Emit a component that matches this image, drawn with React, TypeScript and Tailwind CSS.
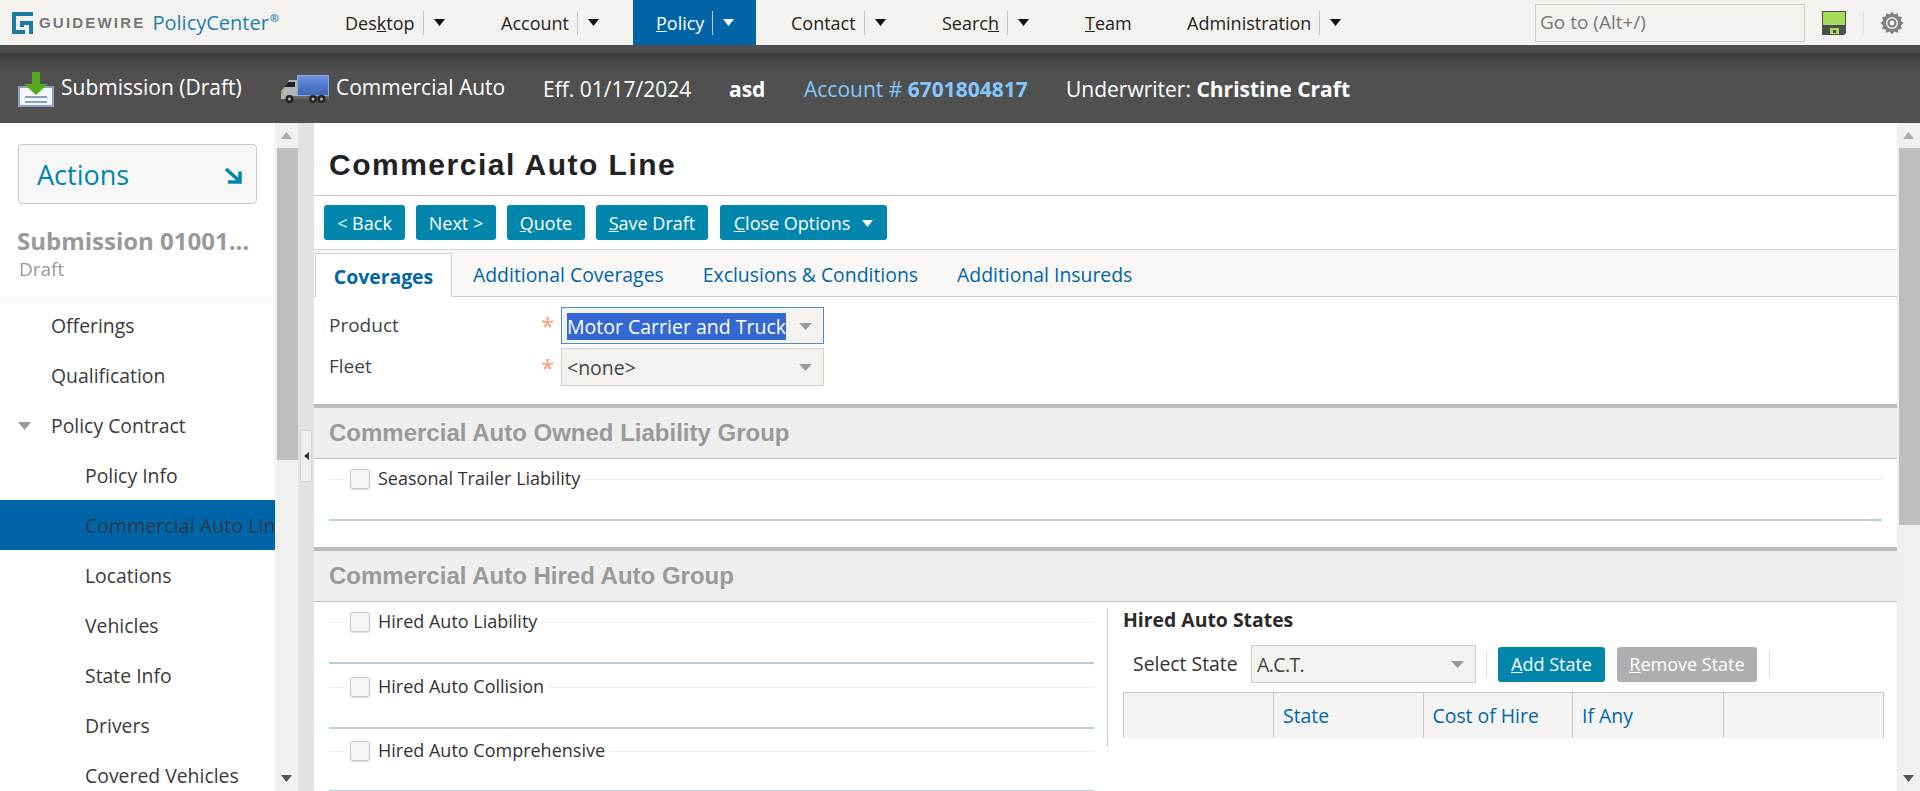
import React from "react";

const Tri = ({ className = "", w = 11, h = 7, fill = "#111" }: { className?: string; w?: number; h?: number; fill?: string }) => (
  <svg width={w} height={h} viewBox="0 0 11 7" preserveAspectRatio="none" className={className}>
    <polygon points="0,0 11,0 5.5,7" fill={fill} />
  </svg>
);

const Sep = () => <div className="h-[24px] w-px bg-[#c9c7c3]" />;

const NavItem = ({ label, boxClass, tw, arrow = true, light = false }: { label: React.ReactNode; boxClass: string; tw: string; arrow?: boolean; light?: boolean }) => (
  <div className={`flex h-full items-center ${boxClass}`}>
    <span className={`${tw} whitespace-nowrap text-[18px] leading-none ${light ? "text-white" : "text-[#222]"}`}>{label}</span>
    {arrow && (
      <>
        <Sep />
        <Tri className="ml-[10px]" fill={light ? "#fff" : "#111"} />
      </>
    )}
  </div>
);

const Btn = ({ children, className = "", grey = false }: { children: React.ReactNode; className?: string; grey?: boolean }) => (
  <div className={`flex h-[35px] shrink-0 items-center justify-center rounded-[3px] pt-[1px] text-[18px] text-white ${grey ? "bg-[#aeaeae]" : "bg-[#0085ad]"} ${className}`}>{children}</div>
);

const SelectBox = ({ children, className = "", focused = false }: { children: React.ReactNode; className?: string; focused?: boolean }) => (
  <div className={`flex items-center justify-between border bg-[#f3f2ef] pl-[5px] pr-[11px] pt-[1px] text-[19.5px] ${focused ? "border-[#4a90c8]" : "border-[#d0d0cc]"} ${className}`}>
    {children}
    <Tri w={13} h={7} fill="#999" />
  </div>
);

const CheckRow = ({ label }: { label: string }) => (
  <div className="flex h-[20px] items-center">
    <div className="h-px w-[16px] bg-[#eeeeee]" />
    <div className="ml-[5px] h-[20px] w-[20px] rounded-[3px] border border-[#c8c8c8] bg-[#f5f5f5] shadow-[0_1px_1px_rgba(0,0,0,0.15)]" />
    <span className="ml-[8px] pb-[2px] text-[18px] leading-none text-[#333]">{label}</span>
    <div className="ml-[4px] h-px flex-1 bg-[#eeeeee]" />
  </div>
);

const Coverage = ({ label, rowClass = "h-[65px]", gapClass = "mt-[30px]" }: { label: string; rowClass?: string; gapClass?: string }) => (
  <div className={rowClass}>
    <CheckRow label={label} />
    <div className={`${gapClass} h-[2px] bg-[#b4cfe2]`} />
  </div>
);

const SideItem = ({ label, deep = false, selected = false, open = false }: { label: string; deep?: boolean; selected?: boolean; open?: boolean }) => (
  <div className={`relative flex h-[50px] shrink-0 items-center overflow-hidden whitespace-nowrap pt-[1px] text-[19.4px] ${deep ? "pl-[85px]" : "pl-[51px]"} ${selected ? "bg-[#0065a8] tracking-[0.12px] text-[#2c3a48]" : "text-[#3a3a3a]"}`}>
    {open && <Tri w={13} h={8} fill="#999" className="absolute left-[18px] top-[22px]" />}
    {label}
  </div>
);

const Scroll = ({ thumb, bottom }: { thumb: string; bottom: string }) => (
  <div className="relative flex w-[23px] shrink-0 flex-col bg-[#f0f0f0]">
    <div className="flex h-[25px] items-center justify-center"><Tri w={11} h={7} fill="#aaa" className="rotate-180" /></div>
    <div className={`ml-[2px] w-[21px] bg-[#bebebe] ${thumb}`} />
    <div className={`absolute left-0 right-0 flex justify-center ${bottom}`}><Tri w={11} h={7} fill="#555" /></div>
  </div>
);

const SectionHead = ({ title }: { title: string }) => (
  <div className="flex h-[55px] items-center border-t-[4px] border-b border-t-[#bcbcbc] border-b-[#c4c4c4] bg-[#eeeeee] pl-[15px] font-['Liberation_Sans',Arial,sans-serif] text-[24px] font-bold leading-none text-[#999]">{title}</div>
);

export default function App() {
  return (
    <div className="flex h-[791px] w-[1920px] flex-col overflow-hidden bg-white font-['Open_Sans',sans-serif] text-[#333]">
      {/* top nav */}
      <div className="flex h-[45px] shrink-0 items-center bg-[#f4f2ef]">
        <div className="flex h-full w-[345px] shrink-0 items-center pl-[12px]">
          <svg width="21" height="22" viewBox="0 0 21 22">
            <path d="M0 0H21V4H4V18H13V22H0Z" fill="#1a7ba3" />
            <path d="M8 9H21V22H17V13H12V15H8Z" fill="#1a7ba3" />
          </svg>
          <span className="ml-[6px] font-['Liberation_Sans',Arial,sans-serif] text-[15px] font-bold leading-none tracking-[2.2px] text-[#777]">GUIDEWIRE</span>
          <span className="ml-[7px] text-[20px] leading-none text-[#1f7fa6]">PolicyCenter</span>
          <span className="mb-[10px] ml-[1px] text-[11px] font-bold leading-none text-[#1f7fa6]">®</span>
        </div>
        <NavItem boxClass="w-[156px] shrink-0" tw="w-[78px]" label={<>Des<u>k</u>top</>} />
        <NavItem boxClass="w-[132px] shrink-0" tw="w-[76px]" label="Account" />
        <NavItem boxClass="w-[123px] shrink-0 bg-[#0065a8] pl-[23px]" tw="w-[56px]" light label={<><u>P</u>olicy</>} />
        <NavItem boxClass="ml-[35px] w-[151px] shrink-0" tw="w-[73px]" label="Contact" />
        <NavItem boxClass="w-[143px] shrink-0" tw="w-[65px]" label={<>Searc<u>h</u></>} />
        <NavItem boxClass="w-[102px] shrink-0" tw="w-[60px]" arrow={false} label={<><u>T</u>eam</>} />
        <NavItem boxClass="shrink-0" tw="w-[132px]" label="Administration" />
        <div className="ml-[194px] flex h-[38px] w-[270px] shrink-0 items-center border border-[#cfcdc8] pl-[4px] text-[19px] text-[#777]">Go to (Alt+/)</div>
        <svg width="24" height="24" viewBox="0 0 24 24" className="ml-[17px] shrink-0">
          <path d="M0 0H24V22L22 24H0Z" fill="#4d4d4d" />
          <rect x="1" y="1" width="22" height="13" fill="#a5dc5c" />
          <rect x="8" y="17" width="9" height="6" fill="#a5dc5c" />
          <rect x="11" y="19" width="3" height="3" fill="#4d4d4d" />
        </svg>
        <div className="ml-[17px] h-[24px] w-px shrink-0 bg-[#e4e2de]" />
        <svg width="24" height="24" viewBox="0 0 24 24" className="ml-[16px] shrink-0">
          <path d="M12 0.5 14.2 3.4 17.6 2.2 18.4 5.6 21.9 6.1 20.8 9.6 23.5 12 20.8 14.4 21.9 17.9 18.4 18.4 17.6 21.8 14.2 20.6 12 23.5 9.8 20.6 6.4 21.8 5.6 18.4 2.1 17.9 3.2 14.4 0.5 12 3.2 9.6 2.1 6.1 5.6 5.6 6.4 2.2 9.8 3.4Z" fill="#808080" />
          <circle cx="12" cy="12" r="6" fill="#f4f2ef" />
          <circle cx="12" cy="12" r="4.6" fill="#808080" />
          <circle cx="12" cy="12" r="2.4" fill="#f4f2ef" />
        </svg>
      </div>

      {/* context bar */}
      <div className="flex h-[78px] shrink-0 flex-col bg-[#505050]">
        <div className="h-[8px] shrink-0 bg-[#4e4e4e]" />
        <div className="flex flex-1 items-start bg-gradient-to-b from-[#3c3c3c] to-[#505050] to-[25%] text-[21px] leading-none text-white">
          <svg width="36" height="35" viewBox="0 0 36 35" className="ml-[18px] mt-[19px] shrink-0">
            <rect x="1" y="15" width="34" height="19" fill="#f3f6fb" stroke="#8aa0c4" strokeWidth="2" />
            <rect x="7" y="24" width="22" height="2" fill="#8aa0c4" />
            <rect x="7" y="29" width="22" height="2" fill="#8aa0c4" />
            <path d="M14 0H22V12H30L18 23L6 12H14Z" fill="#56a81f" />
          </svg>
          <span className="ml-[7px] mt-[24px] w-[220px] shrink-0 whitespace-nowrap">Submission (Draft)</span>
          <svg width="48" height="28" viewBox="0 0 48 28" className="mt-[22px] shrink-0">
            <defs>
              <linearGradient id="truckbox" x1="0" y1="0" x2="0" y2="1">
                <stop offset="0" stopColor="#6b93e6" />
                <stop offset="1" stopColor="#3f62b4" />
              </linearGradient>
            </defs>
            <rect x="16.5" y="0.5" width="31" height="20" fill="url(#truckbox)" stroke="#88a6e0" />
            <path d="M16 5H8L3 13 0 16V24H16Z" fill="#b4b4b4" />
            <path d="M7 7H14V12H3.5Z" fill="#222" />
            <rect x="0" y="16" width="1.5" height="3" fill="#c98a3a" />
            <rect x="12" y="21" width="36" height="3" fill="#666" />
            <circle cx="8.5" cy="24" r="4" fill="#222" />
            <circle cx="32" cy="24" r="4" fill="#222" />
            <circle cx="40.5" cy="24" r="4" fill="#222" />
            <circle cx="8.5" cy="24" r="1.5" fill="#bbb" />
            <circle cx="32" cy="24" r="1.5" fill="#bbb" />
            <circle cx="40.5" cy="24" r="1.5" fill="#bbb" />
          </svg>
          <span className="ml-[7px] mt-[24px] w-[207px] shrink-0 whitespace-nowrap">Commercial Auto</span>
          <span className="mt-[26px] w-[186px] shrink-0 whitespace-nowrap">Eff. 01/17/2024</span>
          <span className="mt-[26px] w-[75px] shrink-0 font-bold">asd</span>
          <span className="mt-[26px] w-[262px] shrink-0 whitespace-nowrap text-[#83c8ff]">Account # <b>6701804817</b></span>
          <span className="mt-[26px] whitespace-nowrap">Underwriter: <b>Christine Craft</b></span>
        </div>
      </div>

      {/* body */}
      <div className="flex min-h-0 flex-1">
        <div className="flex w-[275px] shrink-0 flex-col overflow-hidden">
          <div className="mx-[18px] mt-[21px] flex h-[60px] shrink-0 items-center justify-between rounded-[4px] border border-[#c8c8c8] bg-[#f7f7f7] pl-[18px] pr-[13px] pt-[2px] text-[27px] text-[#0085ad]">
            Actions
            <svg width="19" height="17" viewBox="0 0 19 17"><path d="M2 2 15.5 14M16 4.5V15H4" stroke="#0085ad" strokeWidth="3.6" fill="none" /></svg>
          </div>
          <div className="mt-[21px] h-[75px] shrink-0 border-b border-[#eeeeee] pl-[17px] pt-[1px]">
            <div className="w-[250px] whitespace-nowrap text-[24px] font-bold leading-[30px] text-[#999]">Submission 01001...</div>
            <div className="pl-[2px] pt-[1px] text-[19px] leading-[25px] text-[#999]">Draft</div>
          </div>
          <SideItem label="Offerings" />
          <SideItem label="Qualification" />
          <SideItem label="Policy Contract" open />
          <SideItem label="Policy Info" deep />
          <SideItem label="Commercial Auto Line" deep selected />
          <SideItem label="Locations" deep />
          <SideItem label="Vehicles" deep />
          <SideItem label="State Info" deep />
          <SideItem label="Drivers" deep />
          <SideItem label="Covered Vehicles" deep />
        </div>
        <Scroll thumb="h-[312px]" bottom="top-[652px]" />
        <div className="relative w-[16px] shrink-0 bg-[#e2e2e2]">
          <div className="absolute left-[2px] top-[307px] flex h-[52px] w-[12px] items-center justify-center rounded-[2px] border border-[#d4d4d4] bg-[#eeeeee]">
            <svg width="5" height="8" viewBox="0 0 5 8"><polygon points="5,0 5,8 0,4" fill="#333" /></svg>
          </div>
        </div>

        {/* main */}
        <div className="flex min-w-0 flex-1 flex-col overflow-hidden">
          <div className="flex h-[73px] shrink-0 items-center border-b border-[#c8c8c8] pl-[15px] pt-[12px] font-['Liberation_Sans',Arial,sans-serif] text-[30px] font-bold leading-none tracking-[1.5px] text-[#222]">Commercial Auto Line</div>
          <div className="flex h-[54px] shrink-0 items-start gap-[11px] border-b border-[#d8d8d8] pl-[10px] pt-[9px]">
            <Btn className="w-[81px]">&lt; Back</Btn>
            <Btn className="w-[80px]">Next &gt;</Btn>
            <Btn className="w-[78px]"><u>Q</u>uote</Btn>
            <Btn className="w-[112px]"><u>S</u>ave Draft</Btn>
            <Btn className="ml-px w-[167px]"><span className="mr-[12px]"><u>C</u>lose Options</span><Tri fill="#fff" /></Btn>
          </div>
          <div className="flex h-[47px] shrink-0 items-end border-b border-[#c8c8c8] bg-[#f9f8f6] pt-[1px] text-[19.4px] text-[#0065a8]">
            <div className="-mb-px ml-px flex h-[44px] w-[137px] items-center justify-center border border-b-0 border-[#d0d0d0] bg-white pt-[2px] font-bold">Coverages</div>
            <div className="flex h-[44px] items-center pl-[21px] pt-[2px]">Additional Coverages</div>
            <div className="flex h-[44px] items-center pl-[39px] pt-[2px]">Exclusions &amp; Conditions</div>
            <div className="flex h-[44px] items-center pl-[39px] pt-[2px]">Additional Insureds</div>
          </div>
          <div className="h-[107px] shrink-0 pl-[15px] pt-[10px] text-[19px]">
            <div className="flex h-[37px] items-center">
              <span className="w-[212px] text-[#444]">Product</span>
              <span className="w-[20px] pt-[1px] text-[24px] text-[#f79a7a]">*</span>
              <SelectBox focused className="h-[37px] w-[263px]"><span className="bg-[#3367d1] leading-[27px] text-white">Motor Carrier and Truck</span></SelectBox>
            </div>
            <div className="mt-[4px] flex h-[38px] items-center">
              <span className="w-[212px] pb-[1px] text-[#444]">Fleet</span>
              <span className="w-[20px] pt-[1px] text-[24px] text-[#f79a7a]">*</span>
              <SelectBox className="h-[38px] w-[263px]"><span className="text-[#444]">&lt;none&gt;</span></SelectBox>
            </div>
          </div>
          <SectionHead title="Commercial Auto Owned Liability Group" />
          <div className="h-[88px] shrink-0 px-[15px] pt-[10px]">
            <Coverage label="Seasonal Trailer Liability" />
          </div>
          <SectionHead title="Commercial Auto Hired Auto Group" />
          <div className="flex min-h-0 flex-1">
            <div className="w-[780px] shrink-0 pl-[15px] pt-[10px]">
              <Coverage label="Hired Auto Liability" />
              <Coverage label="Hired Auto Collision" rowClass="h-[64px]" />
              <Coverage label="Hired Auto Comprehensive" gapClass="mt-[29px]" />
            </div>
            <div className="ml-[13px] mt-[6px] h-[138px] w-[764px] shrink-0 border-l border-[#b4cfe2] pl-[15px]">
              <div className="text-[19.4px] font-bold leading-[24px] text-[#2a2a2a]">Hired Auto States</div>
              <div className="mt-[13px] flex h-[38px] items-center pl-[10px] text-[19.4px]">
                <span className="w-[118px] text-[#333]">Select State</span>
                <SelectBox className="h-[38px] w-[225px]"><span className="tracking-[-0.6px] text-[#444]">A.C.T.</span></SelectBox>
                <div className="ml-[10px] h-[24px] w-px bg-[#ddd]" />
                <Btn className="ml-[11px] w-[107px]"><span><u>A</u>dd State</span></Btn>
                <Btn grey className="ml-[12px] w-[140px]"><span><u>R</u>emove State</span></Btn>
                <div className="ml-[12px] h-[24px] w-px bg-[#ddd]" />
              </div>
              <div className="mt-[9px] grid h-[46px] w-[761px] grid-cols-[150px_149.5px_149.5px_151px_160px] border-x border-t border-[#c8c8c8] bg-[#f4f4f4] text-[19.4px] text-[#0065a8]">
                <div className="border-r border-[#c8c8c8]" />
                <div className="flex items-center border-r border-[#c8c8c8] pl-[9px]">State</div>
                <div className="flex items-center border-r border-[#c8c8c8] pl-[9px]">Cost of Hire</div>
                <div className="flex items-center border-r border-[#c8c8c8] pl-[9px]">If Any</div>
                <div />
              </div>
            </div>
          </div>
        </div>
        <Scroll thumb="h-[377px]" bottom="top-[652px]" />
      </div>
    </div>
  );
}
